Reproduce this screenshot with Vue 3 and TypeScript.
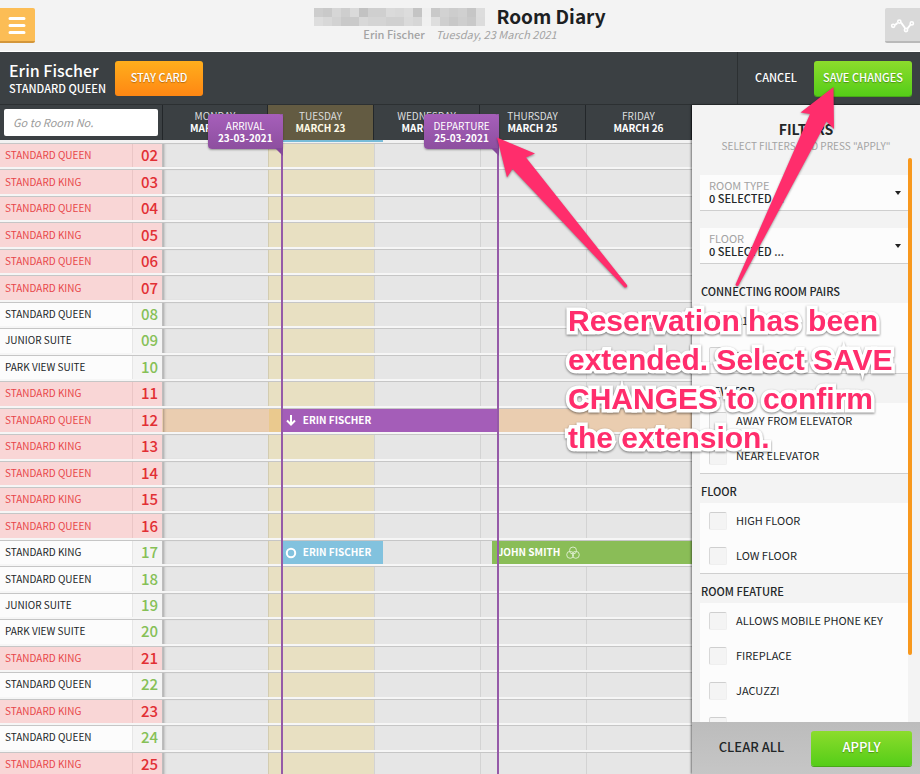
<script setup lang="ts">
import { ref } from 'vue'

type BarKind = 'arriving' | 'inhouse' | 'booked'
interface Booking { guest: string; from: number; to: number; kind: BarKind }
interface Room { no: string; type: string; occupied: boolean; selected: boolean; bookings: Booking[] }

const days = [
  { name: 'Monday', date: 'March 22' },
  { name: 'Tuesday', date: 'March 23', today: true },
  { name: 'Wednesday', date: 'March 24' },
  { name: 'Thursday', date: 'March 25' },
  { name: 'Friday', date: 'March 26' },
]

// Positions along the calendar, in days from its left edge
const arrival = 1.13
const departure = 3.17
const inhouseEnd = 2.085

const markers = [
  { label: 'Arrival', date: '23-03-2021', at: arrival },
  { label: 'Departure', date: '25-03-2021', at: departure },
]

const typeNames: Record<string, string> = {
  Q: 'Standard Queen', K: 'Standard King', J: 'Junior Suite', P: 'Park View Suite',
}
const bookings: Record<string, Booking[]> = {
  '12': [{ guest: 'Erin Fischer', from: arrival, to: departure, kind: 'arriving' }],
  '17': [
    { guest: 'Erin Fischer', from: arrival, to: inhouseEnd, kind: 'inhouse' },
    { guest: 'John Smith', from: 3.11, to: 5, kind: 'booked' },
  ],
}
const freeRooms = [8, 9, 10, 17, 18, 19, 20, 22, 24]
const rooms: Room[] = [...'QKQKQKQJPKQKQKQKQJPKQKQK'].map((t, i) => {
  const n = i + 2
  const no = String(n).padStart(2, '0')
  return { no, type: typeNames[t], occupied: !freeRooms.includes(n), selected: n === 12, bookings: bookings[no] ?? [] }
})

const at = (day: number) => day / days.length
const span = (from: number, to: number) => ({ '--from': at(from), '--to': at(to) })

const selects = ['Room type', 'Floor']
const groups = [
  { title: 'Connecting room pairs', options: ['211 - 212', '311 - 312'] },
  { title: 'Elevator', options: ['Away from elevator', 'Near elevator'] },
  { title: 'Floor', options: ['High floor', 'Low floor'] },
  { title: 'Room feature', options: ['Allows mobile phone key', 'Fireplace', 'Jacuzzi', 'Kitchen'] },
]
const chosen = ref<string[]>([])
const roomSearch = ref('')

// Shades of the masked property name, two rows of tiles
const tiles = [
  'cdcdcd', 'c9c9c9', 'd6d6d6', 'cecece', 'dadada', 'c2c2c2', 'cfcfcf', 'cfcfcf', 'dadada', 'd8d8d8', 'dcdcdc', 'c4c4c4', 'efefef', 'c9c9c9', 'd2d2d2', 'cdcdcd', 'd0d0d0', 'c6c6c6', 'dddddd',
  'dddddd', 'd8d8d8', 'd2d2d2', 'c9c9c9', 'cacaca', 'd8d8d8', 'd4d4d4', 'd4d4d4', 'd0d0d0', 'd0d0d0', 'dadada', 'd6d6d6', 'f0f0f0', 'dedede', 'cfcfcf', 'c8c8c8', 'cecece', 'c9c9c9', 'dcdcdc',
]
</script>

<template>
  <div class="page">
    <header class="top">
      <button class="menu" aria-label="Menu">
        <svg width="18" height="18" viewBox="0 0 18 18"><path d="M2 2.500h14M2 9.500h14M2 16.500h14" stroke="#fff" stroke-width="3" stroke-linecap="round" /></svg>
      </button>
      <div class="heading">
        <div class="title">
          <span class="mask"><i v-for="(t, i) in tiles" :key="i" :style="{ background: '#' + t }"></i></span>
          <h1>Room Diary</h1>
        </div>
        <p class="sub"><b>Erin Fischer</b><em>Tuesday, 23 March 2021</em></p>
      </div>
      <button class="stats" aria-label="Statistics">
        <svg width="26" height="18" viewBox="0 0 26 18" fill="none" stroke="#fff" stroke-width="1.600">
          <path d="M6 9l2.500-2M12 6.500l4 5.500M18.500 12.500l3.500-4.500" stroke-width="2" />
          <circle cx="4.200" cy="9.800" r="1.600" /><circle cx="10.300" cy="5.600" r="1.600" />
          <circle cx="17" cy="14" r="1.600" /><circle cx="22.800" cy="7.400" r="1.600" />
        </svg>
      </button>
    </header>

    <div class="toolbar">
      <div class="guest">
        <strong>Erin Fischer</strong>
        <span>Standard Queen</span>
      </div>
      <button class="btn orange">Stay card</button>
      <div class="actions">
        <button class="btn plain">Cancel</button>
        <button class="btn green">Save changes</button>
      </div>
    </div>

    <main class="body">
      <section class="diary">
        <table>
          <thead>
            <tr>
              <th class="search"><input v-model="roomSearch" type="text" placeholder="Go to Room No." aria-label="Go to Room No." /></th>
              <th v-for="d in days" :key="d.name" class="day" :class="{ today: d.today }">
                <span>{{ d.name }}</span>{{ d.date }}
              </th>
            </tr>
          </thead>
          <tbody>
            <tr v-for="r in rooms" :key="r.no" :class="{ occupied: r.occupied, selected: r.selected }">
              <th scope="row"><span class="type">{{ r.type }}</span><span class="no">{{ r.no }}</span></th>
              <td v-for="(d, i) in days" :key="d.name" :class="{ today: d.today }">
                <template v-if="i === 0">
                  <div v-for="b in r.bookings" :key="b.guest" class="bar" :class="b.kind" :style="span(b.from, b.to)">
                    <svg v-if="b.kind === 'arriving'" width="12" height="12" viewBox="0 0 12 12" fill="none" stroke="#fff" stroke-width="2"><path d="M6 1v9M2 6.500l4 4 4-4" /></svg>
                    <svg v-if="b.kind === 'inhouse'" width="12" height="12" viewBox="0 0 12 12" fill="none" stroke="#fff" stroke-width="2"><circle cx="6" cy="6" r="4.200" /></svg>
                    <span>{{ b.guest }}</span>
                    <svg v-if="b.kind === 'booked'" width="14" height="14" viewBox="0 0 14 14" fill="none" stroke="#d9ecc8" stroke-width="1"><circle cx="7" cy="4.500" r="3.500" /><circle cx="4.200" cy="8.800" r="3.500" /><circle cx="9.800" cy="8.800" r="3.500" /></svg>
                  </div>
                </template>
              </td>
            </tr>
          </tbody>
        </table>
        <div class="peek" :style="span(arrival, inhouseEnd)"></div>
        <div v-for="m in markers" :key="m.label" class="marker" :style="{ '--from': at(m.at) }">
          <div class="flag"><span>{{ m.label }}</span><b>{{ m.date }}</b></div>
        </div>
      </section>

      <aside class="filters">
        <div class="filters-head">
          <h2>Filters</h2>
          <p>Select filters and press "Apply"</p>
        </div>
        <div class="scroller">
          <div class="options">
            <div class="pickers">
              <label v-for="s in selects" :key="s" class="picker">
                <span>{{ s }}</span>
                <select><option>0 SELECTED ...</option></select>
              </label>
            </div>
            <fieldset v-for="g in groups" :key="g.title">
              <legend>{{ g.title }}</legend>
              <div class="card">
                <label v-for="o in g.options" :key="o"><input v-model="chosen" type="checkbox" :value="o" /><span>{{ o }}</span></label>
              </div>
            </fieldset>
          </div>
          <div class="thumb"></div>
        </div>
        <footer>
          <button class="clear" @click="chosen = []">Clear all</button>
          <button class="btn green">Apply</button>
        </footer>
      </aside>
    </main>

    <svg class="arrows" width="920" height="300" viewBox="0 0 920 300">
      <path d="M497 137.500L535 153.500 526 157.500 627 285Q628 288 624.500 287.500L512.500 169 507 177.500Z" />
      <path d="M833.500 87L834 129 826.500 121.500 738.500 285.500Q736.500 287.500 735.500 284.500L810 114 800.500 112.500Z" />
    </svg>
    <p class="note">Reservation has been<br />extended. Select SAVE<br />CHANGES to confirm<br />the extension.</p>
  </div>
</template>

<style>
html, body, #app { height: 100%; }
body { margin: 0; }
</style>

<style scoped>
* { box-sizing: border-box; }
.page {
  --rooms: 162px;
  position: relative;
  display: flex;
  flex-direction: column;
  height: 100vh;
  overflow: hidden;
  background: #f3f3f3;
  color: #222628;
  font-family: "Noto Sans CJK JP", "Noto Sans", sans-serif;
  font-size: 11px;
  line-height: 14px;
}
button, input, select { font: inherit; color: inherit; }
button { border: 0; padding: 0; cursor: pointer; }
h1, h2, p { margin: 0; }

.top { display: flex; align-items: flex-start; justify-content: space-between; height: 52px; padding-top: 8px; border-bottom: 1px solid #fff; }
.menu, .stats { width: 35px; height: 35px; display: flex; align-items: center; }
.menu { background: #fcbd55; border-bottom: 2px solid #d3963a; border-radius: 0 2px 2px 0; padding-left: 8px; }
.stats { background: #d9d9d9; border-bottom: 2px solid #b9b9b9; border-radius: 2px 0 0 2px; padding-left: 4px; }
.heading { display: flex; flex-direction: column; align-items: center; }
.title { display: flex; align-items: center; gap: 11px; height: 18px; }
.mask { display: grid; grid-template-columns: repeat(19, 9px); grid-auto-rows: 9px; }
h1 { font-size: 19px; line-height: 16px; padding-bottom: 2px; font-weight: 700; color: #1c2022; }
.sub { display: flex; gap: 11px; color: #a3a3a3; line-height: 16px; }
.sub b { font-weight: 500; }

.toolbar { display: flex; align-items: center; height: 53px; padding-left: 9px; background: #3b4043; color: #fff; border-bottom: 1px solid #2c3032; }
.guest { display: flex; flex-direction: column; gap: 2px; margin-right: 9px; }
.guest strong { font-size: 16px; line-height: 18px; font-weight: 500; }
.guest span { font-weight: 500; text-transform: uppercase; }
.btn { height: 35px; padding-bottom: 2px; border-radius: 3px; font-weight: 500; text-transform: uppercase; color: #fff; text-shadow: 0 1px 1px rgba(0, 0, 0, .3); }
.orange { width: 88px; background: linear-gradient(#ffae1c, #ff8713); }
.green { width: 98px; background: linear-gradient(#8cdc2c, #55cd18); box-shadow: 0 1px 0 #48a818; }
.plain { width: 76px; background: none; text-shadow: none; }
.actions { display: flex; align-items: center; align-self: stretch; margin-left: auto; padding-right: 8px; border-left: 1px solid #2c3032; }

.body { display: flex; flex: 1; min-height: 0; }
.diary { position: relative; flex: 1; min-width: 0; overflow: hidden; background: #e6e6e6; }
table { display: flex; flex-direction: column; height: calc(100% + 4px); }
tr { display: grid; grid-template-columns: var(--rooms) repeat(5, 1fr); position: relative; }
thead tr { height: 35px; background: #3b4043; color: #fff; }
thead { border-bottom: 3px solid #f2f2f2; }
th, td { padding: 0; }
.search { padding: 4px; text-align: left; }
.search input { width: 100%; height: 27px; border: 0; border-radius: 2px; background: #fff; padding: 0 9px 2px; font-weight: 400; display: block; }
.search input::placeholder { color: #9b9b9b; font-style: italic; opacity: 1; }
.day { border-right: 1px solid #23272a; padding-top: 5px; line-height: 12px; font-weight: 700; font-size: 10px; text-transform: uppercase; }
.search + .day { border-left: 1px solid #23272a; }
.day span { display: block; font-weight: 400; color: #dcdedf; }
.day.today { background: #635b42; color: #fffbe8; }
tbody { flex: 1; display: grid; grid-template-rows: repeat(24, 1fr); min-height: 0; }
tbody tr { border-top: 1px solid #c6c6c6; border-bottom: 2px solid #f6f6f6; min-height: 0; }
tbody th { display: flex; background: #fcfcfc; font-weight: 400; font-size: 10px; align-items: stretch; text-transform: uppercase; }
.type, .no { display: flex; align-items: center; }
.type { flex: 1; padding: 0 0 1px 5px; }
.no { width: 30px; justify-content: flex-end; padding: 0 4px 1px 0; font-size: 15px; font-weight: 500; color: #86c057; background: #f4f4f4; border-left: 1px solid #e6e6e6; }
.occupied th { background: #f9d6d6; color: #e8464a; }
.occupied .no { background: #f9d6d6; border-color: #eac6c6; color: #e22f34; }
td { border-left: 1px solid #d3d3d3; background: #e6e6e6; }
td:first-of-type { border-color: #bdbdbd; box-shadow: inset 3px 0 3px -2px rgba(0, 0, 0, .3); }
td.today { background: #e8e0c2; border-color: #d3ccb0; }
.selected td { background: #eacdb0; border-color: #eacdb0; }
.selected td.today { background: #eac98e; }

.bar, .peek { position: absolute; left: calc(var(--rooms) + (100% - var(--rooms)) * var(--from)); width: calc((100% - var(--rooms)) * (var(--to) - var(--from))); }
.bar { top: 0; bottom: 0; display: flex; align-items: center; gap: 6px; padding-left: 3px; color: #fff; font-size: 10px; font-weight: 700; text-transform: uppercase; }
.bar span { padding-bottom: 1px; }
.arriving { background: #a45db8; }
.inhouse { background: #82c2de; }
.booked { background: #8abd57; padding-left: 6px; }
.peek { top: 35px; height: 2px; background: #78bcd8; }
.marker { position: absolute; top: 9px; bottom: 0; left: calc(var(--rooms) + (100% - var(--rooms)) * var(--from) - 1px); width: 2px; background: #955aa8; z-index: 2; }
.flag { position: absolute; top: 0; right: 0; width: 75px; height: 35px; padding-top: 6px; border-radius: 4px; background: linear-gradient(#a65fba, #8d4f9f); color: #fff; text-align: center; font-size: 10px; line-height: 12px; box-shadow: 0 1px 2px rgba(0, 0, 0, .35); }
.flag span { display: block; text-transform: uppercase; line-height: 12px; }
.flag b { font-weight: 700; }
.flag::after { content: ""; position: absolute; right: 0; top: 34px; border-top: 8px solid #84489a; border-left: 8px solid transparent; }

.filters { display: flex; flex-direction: column; width: 228px; background: #f3f3f3; box-shadow: -1px 0 2px rgba(0, 0, 0, .5); z-index: 1; }
.filters-head { padding-top: 16px; text-align: center; text-transform: uppercase; }
h2 { font-size: 14px; line-height: 16px; font-weight: 700; }
.filters-head p { font-size: 10px; line-height: 17px; color: #a3a3a3; }
.scroller { display: flex; flex: 1; min-height: 0; padding: 4px 8px 0; overflow: hidden; }
.options { flex: 1; height: 100%; overflow: hidden; padding-top: 17px; }
.thumb { width: 4px; height: 497px; border-radius: 2px; background: #f8981d; }
.pickers { display: flex; flex-direction: column; gap: 17px; margin-bottom: 9px; }
.picker { display: flex; flex-direction: column; height: 36px; padding: 4px 0 0 9px; background: #fcfcfc; border-bottom: 1px solid #cfcfcf; position: relative; line-height: 13px; text-transform: uppercase; }
.picker span { color: #a3a3a3; }
.picker select { appearance: none; border: 0; padding: 0; background: none; font-weight: 500; height: 13px; line-height: 13px; }
.picker::after { content: ""; position: absolute; right: 7px; top: 16px; border: 3px solid transparent; border-top: 4px solid #222; border-bottom: 0; }
fieldset { border: 0; margin: 0; padding: 0; min-width: 0; }
legend { padding: 0 0 0 1px; height: 30px; line-height: 36px; font-weight: 500; text-transform: uppercase; }
.card { background: #fcfcfc; box-shadow: 0 1px 0 #cfcfcf; }
.card label { display: flex; align-items: center; gap: 9px; height: 35px; padding-left: 9px; text-transform: uppercase; }
.card span { padding-bottom: 2px; }
.card input { appearance: none; width: 18px; height: 18px; margin: 0; background: #f4f4f4; border: 1px solid #efefef; border-top-color: #cfcfcf; border-left-color: #d8d8d8; border-radius: 2px; }
footer { display: flex; align-items: center; justify-content: space-between; height: 52px; padding: 0 8px 0 0; background: linear-gradient(#bcbcbc, #c6c6c6); }
footer .btn { width: 101px; font-size: 13px; }
.clear { flex: 1; height: 35px; padding-bottom: 2px; background: none; font-weight: 500; font-size: 13px; text-transform: uppercase; }

.arrows { position: absolute; left: 0; top: 0; z-index: 5; fill: #ff2d6c; pointer-events: none; filter: drop-shadow(0 1px 1px rgba(0, 0, 0, .4)); }
.note { position: absolute; left: 568px; top: 301px; z-index: 6; font: 700 30px/39px "Liberation Sans", Arial, sans-serif; color: #ff2d6c; white-space: nowrap; -webkit-text-stroke: 7px #fff; paint-order: stroke fill; filter: drop-shadow(0 1px 1px rgba(0, 0, 0, .5)); }
</style>
